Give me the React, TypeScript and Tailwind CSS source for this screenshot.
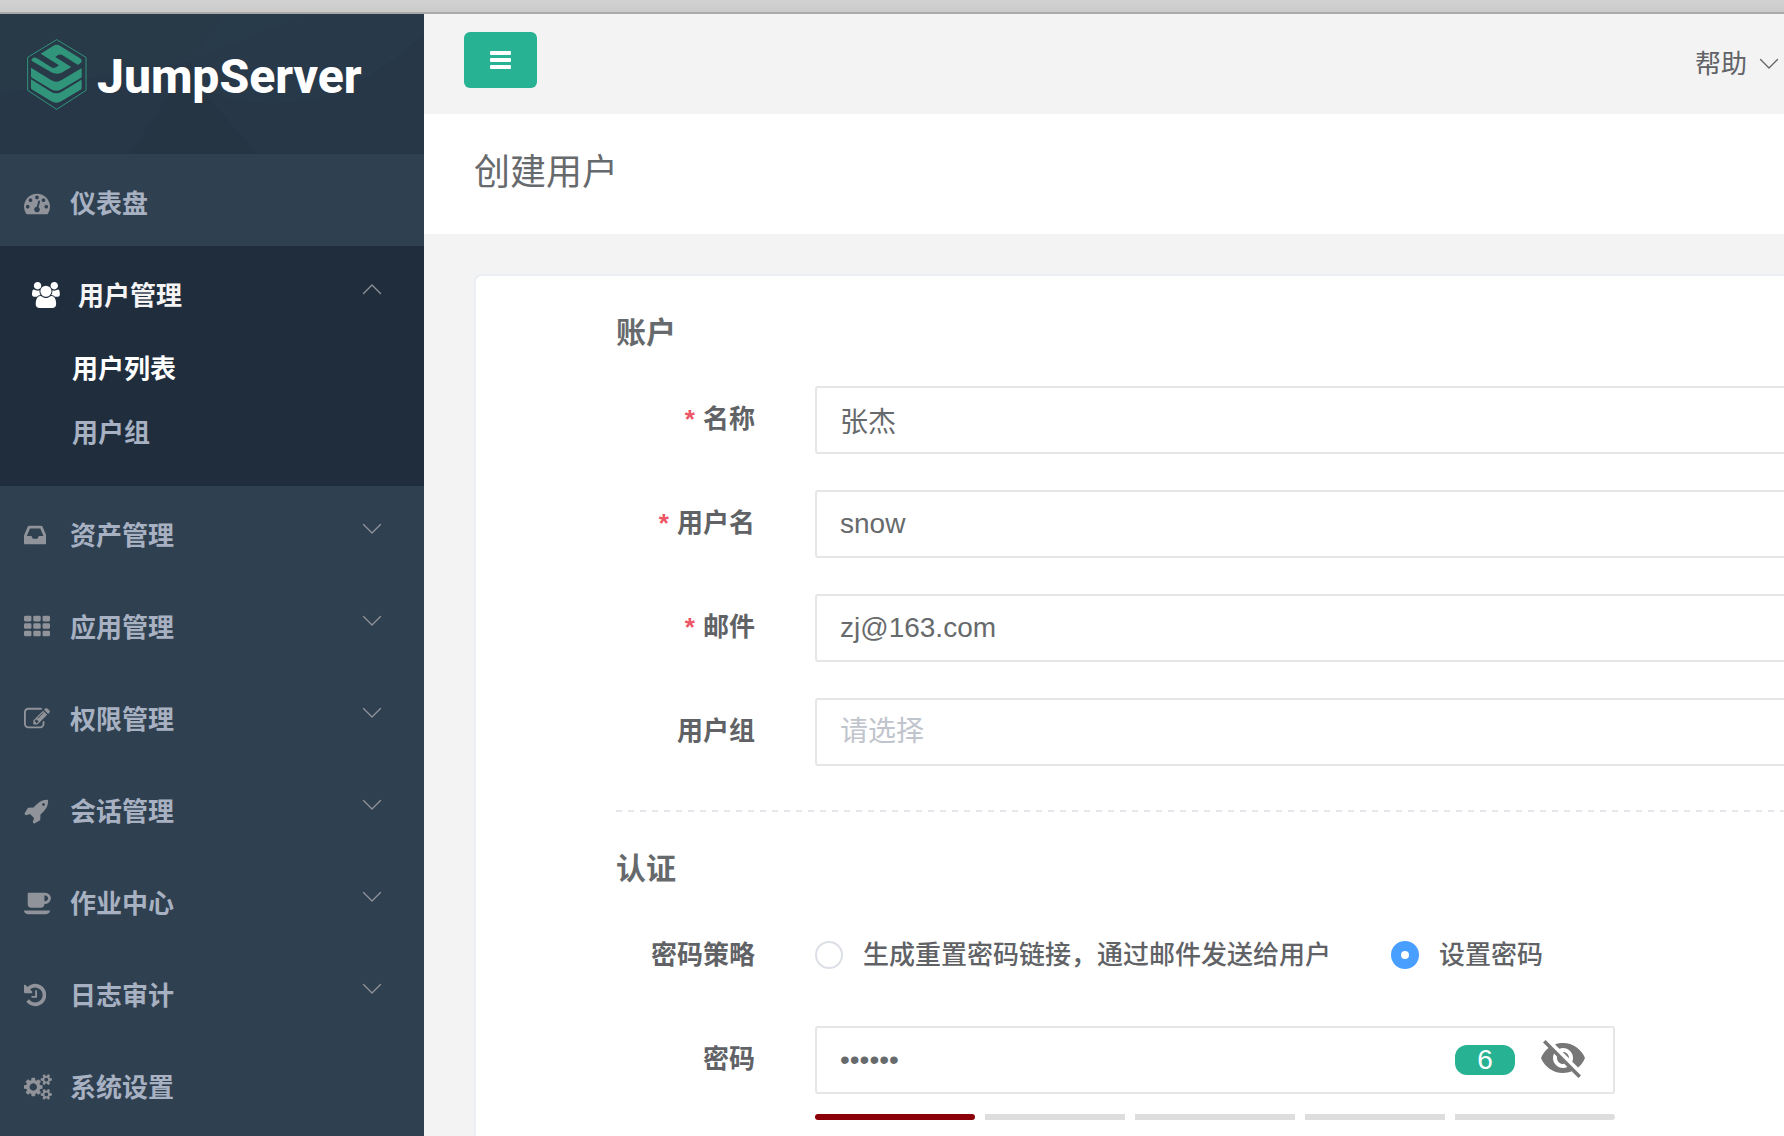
import { useState, type ReactNode } from "react";
import { MdVisibility, MdVisibilityOff } from "react-icons/md";

type IconProps = { viewBox: string; children: ReactNode };

function MenuIcon({ viewBox, children }: IconProps) {
  return (
    <svg viewBox={viewBox} className="h-[26px] w-auto" fill="currentColor" aria-hidden="true">
      {children}
    </svg>
  );
}

const icons = {
  dashboard: (
    <MenuIcon viewBox="0 0 1792 1792">
      <path d="M384 1152q0-53-37.5-90.5t-90.5-37.5-90.5 37.5-37.5 90.5 37.5 90.5 90.5 37.5 90.5-37.5 37.5-90.5zm192-448q0-53-37.5-90.5t-90.5-37.5-90.5 37.5-37.5 90.5 37.5 90.5 90.5 37.5 90.5-37.5 37.5-90.5zm428 481l101-382q6-26-7.5-48.5t-38.5-29.5-48 6.5-30 39.5l-101 382q-60 5-107 43.5t-63 98.5q-20 77 20 146t117 89 146-20 89-117q16-60-6-117t-72-91zm660-33q0-53-37.5-90.5t-90.5-37.5-90.5 37.5-37.5 90.5 37.5 90.5 90.5 37.5 90.5-37.5 37.5-90.5zm-640-640q0-53-37.5-90.5t-90.5-37.5-90.5 37.5-37.5 90.5 37.5 90.5 90.5 37.5 90.5-37.5 37.5-90.5zm448 192q0-53-37.5-90.5t-90.5-37.5-90.5 37.5-37.5 90.5 37.5 90.5 90.5 37.5 90.5-37.5 37.5-90.5zm320 448q0 261-141 483-19 29-54 29h-1402q-35 0-54-29-141-221-141-483 0-182 71-348t191-286 286-191 348-71 348 71 286 191 191 286 71 348z" />
    </MenuIcon>
  ),
  users: (
    <MenuIcon viewBox="0 0 1920 1792">
      <path d="M593 896q-162 5-265 128h-134q-82 0-138-40.5t-56-118.5q0-353 124-353 6 0 43.5 21t97.5 42.5 119 21.5q67 0 133-23-5 37-5 66 0 139 81 256zm1071 637q0 120-73 189.5t-194 69.5h-874q-121 0-194-69.5t-73-189.5q0-53 3.5-103.5t14-109 26.5-108.5 43-97.5 62-81 85.5-53.5 111.5-20q10 0 43 21.5t73 48 107 48 135 21.5 135-21.5 107-48 73-48 43-21.5q61 0 111.5 20t85.5 53.5 62 81 43 97.5 26.5 108.5 14 109 3.5 103.5zm-1024-1277q0 106-75 181t-181 75-181-75-75-181 75-181 181-75 181 75 75 181zm704 384q0 159-112.5 271.5t-271.5 112.5-271.5-112.5-112.5-271.5 112.5-271.5 271.5-112.5 271.5 112.5 112.5 271.5zm576 225q0 78-56 118.5t-138 40.5h-134q-103-123-265-128 81-117 81-256 0-29-5-66 66 23 133 23 59 0 119-21.5t97.5-42.5 43.5-21q124 0 124 353zm-128-609q0 106-75 181t-181 75-181-75-75-181 75-181 181-75 181 75 75 181z" />
    </MenuIcon>
  ),
  inbox: (
    <MenuIcon viewBox="128 0 1536 1792">
      <path d="M1151 960h316q-1-3-2.5-8t-2.5-8l-212-496h-708l-212 496q-1 2-2.5 8t-2.5 8h316l95 192h320zm513 30v482q0 26-19 45t-45 19h-1408q-26 0-45-19t-19-45v-482q0-62 25-123l238-552q10-25 36.5-42t52.5-17h832q26 0 52.5 17t36.5 42l238 552q25 61 25 123z" />
    </MenuIcon>
  ),
  grid: (
    <MenuIcon viewBox="0 0 1792 1792">
      {[128, 640, 1152].map((y) =>
        [0, 640, 1280].map((x) => <rect key={`${x}-${y}`} x={x} y={y} width="512" height="384" rx="96" />)
      )}
    </MenuIcon>
  ),
  edit: (
    <MenuIcon viewBox="0 0 1792 1792">
      <path d="M888 1184l116-116-152-152-116 116v56h96v96h56zm440-720q-16-16-33 1l-350 350q-17 17-1 33t33-1l350-350q17-17 1-33zm80 594v190q0 119-84.5 203.5t-203.5 84.5h-832q-119 0-203.5-84.5t-84.5-203.5v-832q0-119 84.5-203.5t203.5-84.5h832q63 0 117 25 15 7 18 23 3 17-9 29l-49 49q-14 14-32 8-23-6-45-6h-832q-66 0-113 47t-47 113v832q0 66 47 113t113 47h832q66 0 113-47t47-113v-126q0-13 9-22l64-64q15-15 35-7t20 29zm-96-738l288 288-672 672h-288v-288zm444 132l-92 92-288-288 92-92q28-28 68-28t68 28l152 152q28 28 28 68t-28 68z" />
    </MenuIcon>
  ),
  rocket: (
    <MenuIcon viewBox="0 0 1792 1792">
      <path d="M1440 448q0-40-28-68t-68-28-68 28-28 68 28 68 68 28 68-28 28-68zm224-288q0 249-75.5 430.5t-253.5 360.5q-81 80-195 176l-20 379q-2 16-16 26l-384 224q-7 4-16 4-12 0-23-9l-64-64q-13-14-8-32l85-276-281-281-276 85q-3 1-9 1-14 0-23-9l-64-64q-17-19-5-39l224-384q10-14 26-16l379-20q96-114 176-195 188-187 358-258t431-71q14 0 24 9.5t10 22.5z" />
    </MenuIcon>
  ),
  coffee: (
    <MenuIcon viewBox="0 0 1920 1792">
      <path d="M1664 576q0-80-56-136t-136-56h-64v384h64q80 0 136-56t56-136zm-1664 832h1792q0 106-75 181t-181 75h-1280q-106 0-181-75t-75-181zm1856-832q0 159-112.5 271.5t-271.5 112.5h-64v32q0 92-66 158t-158 66h-704q-92 0-158-66t-66-158v-736q0-26 19-45t45-19h1152q159 0 271.5 112.5t112.5 271.5z" />
    </MenuIcon>
  ),
  history: (
    <MenuIcon viewBox="128 0 1536 1792">
      <path d="M1664 896q0 156-61 298t-164 245-245 164-298 61q-172 0-327-72.5t-264-204.5q-7-10-6.5-22.5t8.5-20.5l137-138q10-9 25-9 16 2 23 12 73 95 179 147t225 52q104 0 198.5-40.5t163.5-109.5 109.5-163.5 40.5-198.5-40.5-198.5-109.5-163.5-163.5-109.5-198.5-40.5q-98 0-188 35.5t-160 101.5l137 138q31 30 14 69-17 40-59 40h-448q-26 0-45-19t-19-45v-448q0-42 40-59 39-17 69 14l130 129q107-101 244.5-156.5t284.5-55.5q156 0 298 61t245 164 164 245 61 298zm-640-288v448q0 14-9 23t-23 9h-320q-14 0-23-9t-9-23v-64q0-14 9-23t23-9h224v-352q0-14 9-23t23-9h64q14 0 23 9t9 23z" />
    </MenuIcon>
  ),
  cogs: (
    <MenuIcon viewBox="0 0 1920 1792">
      <path d="M896 896q0-106-75-181t-181-75-181 75-75 181 75 181 181 75 181-75 75-181zm768 512q0-52-38-90t-90-38-90 38-38 90q0 53 37.5 90.5t90.5 37.5 90.5-37.5 37.5-90.5zm0-1024q0-52-38-90t-90-38-90 38-38 90q0 53 37.5 90.5t90.5 37.5 90.5-37.5 37.5-90.5zm-384 421v185q0 10-7 19.5t-16 10.5l-155 24q-11 35-32 76 34 48 90 115 7 11 7 20 0 12-7 19-23 30-82.5 89.5t-78.5 59.5q-11 0-21-7l-115-90q-37 19-77 31-11 108-23 155-7 24-30 24h-186q-11 0-20-7.5t-10-17.5l-23-153q-34-10-75-31l-118 89q-7 7-20 7-11 0-21-8-144-133-144-160 0-9 7-19 10-14 41-53t47-61q-23-44-35-82l-152-24q-10-1-17-9.5t-7-19.5v-185q0-10 7-19.5t16-10.5l155-24q11-35 32-76-34-48-90-115-7-11-7-20 0-12 7-20 22-30 82-89t79-59q11 0 21 7l115 90q34-18 77-32 11-108 23-154 7-24 30-24h186q11 0 20 7.5t10 17.5l23 153q34 10 75 31l118-89q8-7 20-7 11 0 21 8 144 133 144 160 0 8-7 19-12 16-42 54t-45 60q23 48 34 82l152 23q10 2 17 10.5t7 19.5zm640 533v140q0 16-149 31-12 27-30 52 51 113 51 138 0 4-4 7-122 71-124 71-8 0-46-47t-52-68q-20 2-30 2t-30-2q-14 21-52 68t-46 47q-2 0-124-71-4-3-4-7 0-25 51-138-18-25-30-52-149-15-149-31v-140q0-16 149-31 13-29 30-52-51-113-51-138 0-4 4-7 4-2 35-20t59-34 30-16q8 0 46 46.5t52 67.5q20-2 30-2t30 2q51-71 92-112l6-2q4 0 124 70 4 3 4 7 0 25-51 138 17 23 30 52 149 15 149 31zm0-1024v140q0 16-149 31-12 27-30 52 51 113 51 138 0 4-4 7-122 71-124 71-8 0-46-47t-52-68q-20 2-30 2t-30-2q-14 21-52 68t-46 47q-2 0-124-71-4-3-4-7 0-25 51-138-18-25-30-52-149-15-149-31v-140q0-16 149-31 13-29 30-52-51-113-51-138 0-4 4-7 4-2 35-20t59-34 30-16q8 0 46 46.5t52 67.5q20-2 30-2t30 2q51-71 92-112l6-2q4 0 124 70 4 3 4 7 0 25-51 138 17 23 30 52 149 15 149 31z" />
    </MenuIcon>
  ),
};

function Chevron({ up = false }: { up?: boolean }) {
  return (
    <svg viewBox="0 0 20 12" className="h-3 w-5" fill="none" stroke="currentColor" strokeWidth="1.3" strokeLinecap="round" strokeLinejoin="round" aria-hidden="true">
      <path d={up ? "M1.5 10.5L10 2l8.5 8.5" : "M1.5 1.5L10 10l8.5-8.5"} />
    </svg>
  );
}

function Logo() {
  return (
    <div className="relative h-[140px] overflow-hidden bg-[#273747]">
      {/* faint facets behind the logo */}
      <svg className="absolute inset-0 h-full w-full" viewBox="0 0 424 140" preserveAspectRatio="none" aria-hidden="true">
        <path d="M0 0H224L190 48L0 80Z" fill="#293b4a" opacity="0.6" />
        <path d="M190 48L130 140H258L200 75Z" fill="#253543" opacity="0.7" />
        <path d="M224 0L190 48L310 0Z" fill="#2a3d4c" opacity="0.6" />
        <path d="M200 75Q320 120 424 20V0H310L190 48Z" fill="#293b4b" opacity="0.7" />
      </svg>
      <a href="#" className="relative flex items-start pt-[25px] pl-[27px]">
        <svg viewBox="80 117 180 213" className="h-[71px] w-[60px]" fill="#30957b" aria-hidden="true">
          <path d="M169 119L257 172V271L169 328L82 271V172Z" fill="none" stroke="#30957b" strokeWidth="3" />
          <path d="M121 161L158 138Q169 131 180 138L238 174Q247 180 243 187L233 195L187 166Q180 161 173 165L165 171L213 201L184 218Q168 225 153 217L96 184Q90 180 95 176Q102 170 110 175L153 202Q160 206 167 202L176 196Z" />
          <path d="M92 203L152 240Q168 250 184 240L243 205Q244 205 244 207V230Q244 233 241 234L184 268Q168 277 152 268L96 234Q92 232 92 228Z" />
          <path d="M92 238L152 275Q168 284 184 275L243 239Q244 239 244 241V263Q244 267 241 269L184 303Q168 313 152 303L96 269Q92 267 92 263Z" />
        </svg>
        <span className="pt-2 pl-2.5 font-['Roboto',sans-serif] text-[48px] leading-[60px] font-extrabold text-white">
          JumpServer
        </span>
      </a>
    </div>
  );
}

type MenuItemProps = { icon: ReactNode; label: string; arrow?: boolean };

function MenuItem({ icon, label, arrow = true }: MenuItemProps) {
  return (
    <li>
      <a href="#" className="flex h-[92px] items-center pt-2 pr-[42px] pl-6">
        <span className="mb-0.5 w-[46px] text-[#909399]">{icon}</span>
        <span className="flex-1">{label}</span>
        {arrow && (
          <span className="mb-3.5 text-[#909399]">
            <Chevron />
          </span>
        )}
      </a>
    </li>
  );
}

function Sidebar() {
  return (
    <aside className="w-[424px] shrink-0 bg-[#2f4050]">
      <Logo />
      <nav className="text-[26px] leading-9 font-bold text-[#a7b1c2]">
        <ul>
          <MenuItem icon={icons.dashboard} label="仪表盘" arrow={false} />
          <li className="bg-[#202d3c] pb-5">
            <a href="#" className="flex h-[92px] items-center pt-2 pr-[42px] pl-8 text-[#f4f4f5]">
              <span className="mb-0.5 w-[46px] text-white">{icons.users}</span>
              <span className="flex-1">用户管理</span>
              <span className="mb-3.5 text-[#909399]">
                <Chevron up />
              </span>
            </a>
            <ul>
              <li>
                <a href="#" className="flex h-16 items-center pb-0.5 pl-[72px] text-white">用户列表</a>
              </li>
              <li>
                <a href="#" className="flex h-16 items-center pb-0.5 pl-[72px]">用户组</a>
              </li>
            </ul>
          </li>
          <MenuItem icon={icons.inbox} label="资产管理" />
          <MenuItem icon={icons.grid} label="应用管理" />
          <MenuItem icon={icons.edit} label="权限管理" />
          <MenuItem icon={icons.rocket} label="会话管理" />
          <MenuItem icon={icons.coffee} label="作业中心" />
          <MenuItem icon={icons.history} label="日志审计" />
          <MenuItem icon={icons.cogs} label="系统设置" arrow={false} />
        </ul>
      </nav>
    </aside>
  );
}

const fieldClass =
  "h-[68px] w-full appearance-none rounded-[3px] border-2 border-[#e5e6e7] bg-white px-[23px] text-[28px] outline-none";

const radioClass =
  "size-7 appearance-none rounded-full border-2 border-[#dcdfe6] checked:border-[10px] checked:border-[#489fff]";

type FormRowProps = { id: string; label: string; required?: boolean; children: ReactNode };

function FormRow({ id, label, required, children }: FormRowProps) {
  return (
    <div className="flex">
      <label htmlFor={id} className="h-[68px] w-[199px] shrink-0 pr-[60px] text-right text-[26px] leading-[66px] font-bold whitespace-nowrap text-[#606266]">
        {required && <span className="mr-2 text-[#ed5565]">*</span>}
        {label}
      </label>
      <div className="min-w-0 flex-1">{children}</div>
    </div>
  );
}

function SectionTitle({ children }: { children: ReactNode }) {
  return <h3 className="mt-[37px] mb-[33px] text-[30px] leading-10 font-bold">{children}</h3>;
}

function PasswordField() {
  const [password, setPassword] = useState("123456");
  const [visible, setVisible] = useState(false);

  return (
    <div className="max-w-[800px]">
      <div className="relative">
        <input
          id="password"
          type={visible ? "text" : "password"}
          value={password}
          onChange={(e) => setPassword(e.target.value)}
          className={fieldClass}
        />
        <div className="absolute inset-y-0 right-7 flex items-center gap-6">
          <span className="h-[30px] w-[60px] rounded-xl bg-[#27b293] text-center text-[28px] leading-[30px] text-white">
            {password.length}
          </span>
          <button type="button" aria-label="显示密码" onClick={() => setVisible(!visible)} className="pb-1 text-[#777777]">
            {visible ? <MdVisibility size={48} /> : <MdVisibilityOff size={48} />}
          </button>
        </div>
      </div>
      {/* strength meter */}
      <div className="mt-5 grid h-1.5 grid-cols-[8fr_7fr_8fr_7fr_8fr] gap-2.5">
        <div className="rounded-sm bg-[#8b0008]" />
        <div className="bg-[#dddddd]" />
        <div className="bg-[#dddddd]" />
        <div className="bg-[#dddddd]" />
        <div className="rounded-r-sm bg-[#dddddd]" />
      </div>
    </div>
  );
}

function UserForm() {
  return (
    <form className="-mr-4 flex-1 rounded-tl-lg border-t-2 border-l-2 border-[#ebeff5] bg-white pl-[140px]">
      <SectionTitle>账户</SectionTitle>
      <div className="flex flex-col gap-9">
        <FormRow id="name" label="名称" required>
          <input id="name" defaultValue="张杰" className={fieldClass} />
        </FormRow>
        <FormRow id="username" label="用户名" required>
          <input id="username" defaultValue="snow" className={fieldClass} />
        </FormRow>
        <FormRow id="email" label="邮件" required>
          <input id="email" type="email" defaultValue="zj@163.com" className={fieldClass} />
        </FormRow>
        <FormRow id="group" label="用户组">
          <select id="group" defaultValue="" className={`${fieldClass} text-[#c0c4cc]`}>
            <option value="">请选择</option>
          </select>
        </FormRow>
      </div>
      <hr className="mt-11 h-0.5 border-0 bg-[repeating-linear-gradient(90deg,#e4e8ec_0_6px,transparent_6px_12px)]" />
      <SectionTitle>认证</SectionTitle>
      <div className="flex flex-col gap-9">
        <FormRow id="strategy-email" label="密码策略">
          <div className="flex h-[66px] items-center gap-[60px] text-[26px] font-medium whitespace-nowrap text-[#606266]">
            <label className="flex items-center gap-5">
              <input id="strategy-email" type="radio" name="strategy" className={radioClass} />
              生成重置密码链接，通过邮件发送给用户
            </label>
            <label className="flex items-center gap-5">
              <input type="radio" name="strategy" defaultChecked className={radioClass} />
              设置密码
            </label>
          </div>
        </FormRow>
        <FormRow id="password" label="密码">
          <PasswordField />
        </FormRow>
      </div>
    </form>
  );
}

export default function App() {
  return (
    <div className="flex min-h-screen flex-col overflow-hidden bg-[#f3f3f3] font-['Liberation_Sans','Noto_Sans_CJK_SC',sans-serif] text-[#676a6c]">
      <div className="h-3.5 border-b-2 border-[#a9a9a9] bg-linear-to-b from-[#d2d2d2] to-[#cacaca]" />
      <div className="flex flex-1">
        <Sidebar />
        <main className="flex min-w-0 flex-1 flex-col">
          <header className="flex h-[100px] items-start justify-between pr-[5px] pl-10">
            <button type="button" aria-label="菜单" className="mt-[18px] flex h-14 w-[73px] items-center justify-center rounded-md bg-[#27b293] text-white">
              <svg viewBox="0 0 22 18" className="h-[18px] w-[22px]" fill="currentColor" aria-hidden="true">
                <rect y="0" width="21" height="4" rx="1" />
                <rect y="7" width="21" height="4" rx="1" />
                <rect y="14" width="21" height="4" rx="1" />
              </svg>
            </button>
            <button type="button" className="mt-8 flex items-center gap-3 text-[26px] leading-9 text-[#606266]">
              帮助
              <Chevron />
            </button>
          </header>
          <div className="h-[120px] bg-white pt-[34px] pl-[50px]">
            <h1 className="text-[36px] leading-[50px] font-normal">创建用户</h1>
          </div>
          <div className="flex flex-1 pt-10 pl-[50px]">
            <UserForm />
          </div>
        </main>
      </div>
    </div>
  );
}
